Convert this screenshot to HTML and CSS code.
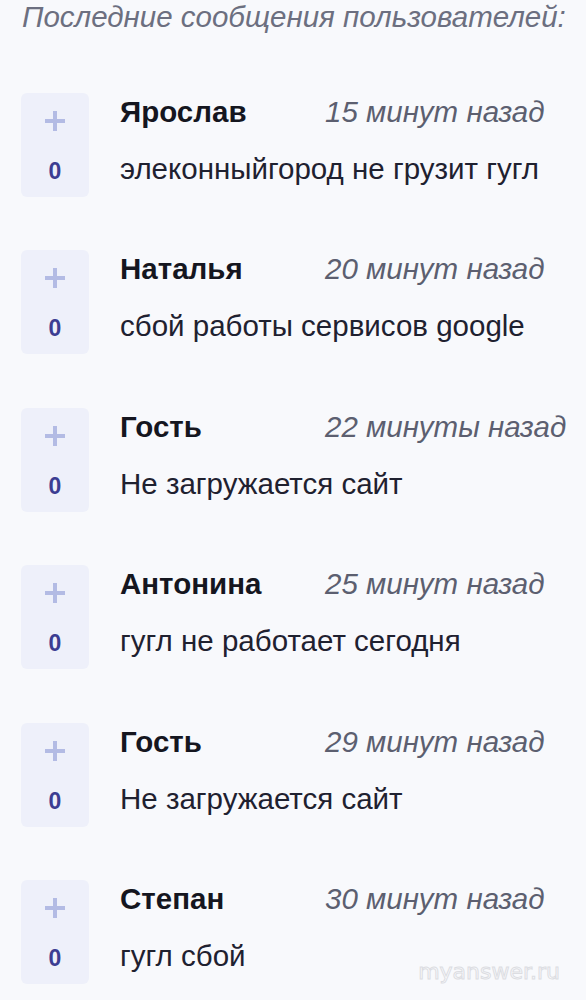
FILE: index.html
```html
<!DOCTYPE html>
<html lang="ru">
<head>
<meta charset="utf-8">
<link rel="stylesheet" href="styles.css">
</head>
<body>
<div class="page">
  <div class="title">Последние сообщения пользователей:</div>
  <ul class="list">
    <li class="item">
      <div class="vote"><span class="plus"></span><span class="count">0</span></div>
      <div class="body">
        <div class="head"><span class="name">Ярослав</span><span class="time">15 минут назад</span></div>
        <div class="text">элеконныйгород не грузит гугл</div>
      </div>
    </li>
    <li class="item">
      <div class="vote"><span class="plus"></span><span class="count">0</span></div>
      <div class="body">
        <div class="head"><span class="name">Наталья</span><span class="time">20 минут назад</span></div>
        <div class="text">сбой работы сервисов google</div>
      </div>
    </li>
    <li class="item">
      <div class="vote"><span class="plus"></span><span class="count">0</span></div>
      <div class="body">
        <div class="head"><span class="name">Гость</span><span class="time">22 минуты назад</span></div>
        <div class="text">Не загружается сайт</div>
      </div>
    </li>
    <li class="item">
      <div class="vote"><span class="plus"></span><span class="count">0</span></div>
      <div class="body">
        <div class="head"><span class="name">Антонина</span><span class="time">25 минут назад</span></div>
        <div class="text">гугл не работает сегодня</div>
      </div>
    </li>
    <li class="item">
      <div class="vote"><span class="plus"></span><span class="count">0</span></div>
      <div class="body">
        <div class="head"><span class="name">Гость</span><span class="time">29 минут назад</span></div>
        <div class="text">Не загружается сайт</div>
      </div>
    </li>
    <li class="item">
      <div class="vote"><span class="plus"></span><span class="count">0</span></div>
      <div class="body">
        <div class="head"><span class="name">Степан</span><span class="time">30 минут назад</span></div>
        <div class="text">гугл сбой</div>
      </div>
    </li>
  </ul>
  <div class="watermark">myanswer.ru</div>
</div>
</body>
</html>
```

FILE: styles.css
```css
html, body {
  margin: 0;
  padding: 0;
  background: #f8f9fc;
}
.page {
  position: relative;
  width: 586px;
  height: 1000px;
  overflow: hidden;
  font-family: "Liberation Sans", Arial, sans-serif;
}
.title {
  padding: 0 0 0 22px;
  font-size: 29.5px;
  line-height: 34px;
  font-style: italic;
  color: #6c6f80;
  white-space: nowrap;
}
.list {
  list-style: none;
  margin: 0;
  padding: 59px 0 0 21px;
  display: flex;
  flex-direction: column;
  gap: 53.4px;
}
.item {
  display: flex;
  align-items: flex-start;
  gap: 31px;
}
.vote {
  width: 68px;
  height: 104px;
  border-radius: 6px;
  background: #eef0fa;
  display: flex;
  flex-direction: column;
  align-items: center;
  box-sizing: border-box;
  padding-top: 18px;
}
.plus {
  position: relative;
  width: 20px;
  height: 20px;
}
.plus::before, .plus::after {
  content: "";
  position: absolute;
  background: #b3bbe4;
}
.plus::before {
  left: 0; top: 8px; width: 20px; height: 4px;
}
.plus::after {
  left: 8px; top: 0; width: 4px; height: 20px;
}
.count {
  margin-top: 28px;
  font-size: 23px;
  line-height: 24px;
  font-weight: bold;
  color: #3c3d92;
}
.body {
  display: flex;
  flex-direction: column;
  padding-top: 2px;
}
.head {
  display: flex;
  align-items: baseline;
  height: 34px;
  line-height: 34px;
  white-space: nowrap;
}
.name {
  width: 205px;
  font-size: 29.5px;
  font-weight: bold;
  color: #15161f;
}
.time {
  font-size: 29.5px;
  font-style: italic;
  color: #5c5f70;
}
.text {
  margin-top: 23px;
  font-size: 29.5px;
  line-height: 34px;
  color: #1f2130;
  white-space: nowrap;
}
.watermark {
  position: absolute;
  right: 26px;
  bottom: 16px;
  font-family: "DejaVu Sans", sans-serif;
  font-size: 22px;
  color: #fafbfd;
  -webkit-text-stroke: 1px #dcdde2;
}
```
